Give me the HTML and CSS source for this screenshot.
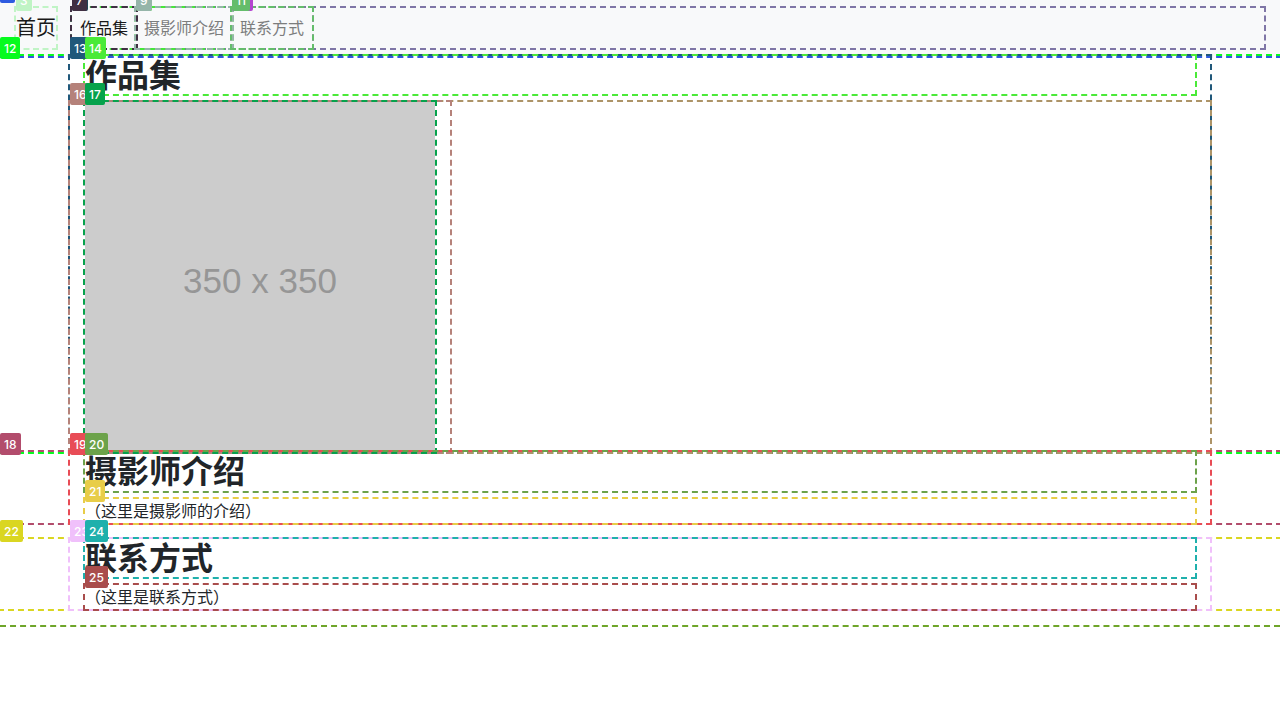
FILE: index.html
```html
<!DOCTYPE html>
<html lang="zh">
<head>
<meta charset="utf-8">
<title>作品集</title>
<link rel="stylesheet" href="styles.css">
</head>
<body>
<div class="page m1">
  <nav class="navbar mark m2"><span class="tag">2</span>
    <a class="brand mark m3" href="#"><span class="tag">3</span>首页</a>
    <div class="collapse mark m4">
      <ul class="nav-list mark m5">
        <li class="mark m6"><span class="tag">6</span><a class="nav-link active mark m7" href="#works"><span class="tag">7</span>作品集</a></li>
        <li class="mark m8"><span class="tag">8</span><a class="nav-link mark m9" href="#about"><span class="tag">9</span>摄影师介绍</a></li>
        <li class="mark m10"><span class="tag">10</span><a class="nav-link mark m11" href="#contact"><span class="tag">11</span>联系方式</a></li>
      </ul>
    </div>
  </nav>
  <section id="works" class="mark m12"><span class="tag">12</span>
    <div class="container mark m13"><span class="tag">13</span>
      <h2 class="mark m14"><span class="tag">14</span>作品集</h2>
      <div class="row mark m15">
        <div class="col mark m16"><span class="tag">16</span>
          <div class="photo mark m17"><span class="tag">17</span>350 x 350</div>
        </div>
      </div>
    </div>
  </section>
  <section id="about" class="mark m18"><span class="tag">18</span>
    <div class="container mark m19"><span class="tag">19</span>
      <h2 class="mark m20"><span class="tag">20</span>摄影师介绍</h2>
      <p class="mark m21"><span class="tag">21</span>（这里是摄影师的介绍）</p>
    </div>
  </section>
  <section id="contact" class="mark m22"><span class="tag">22</span>
    <div class="container mark m23"><span class="tag">23</span>
      <h2 class="mark m24"><span class="tag">24</span>联系方式</h2>
      <p class="mark m25"><span class="tag">25</span>（这里是联系方式）</p>
    </div>
  </section>
</div>
</body>
</html>
```
FILE: styles.css
```css
* { box-sizing: border-box; }
body {
  margin: 0;
  background: #fff;
  color: #212529;
  font: 16px/24px "Noto Sans", "Noto Sans CJK SC", sans-serif;
}
.page { border-bottom: 2px dashed var(--c); }
section { margin-bottom: 16px; }
#works { margin-bottom: 0; }

.mark { position: relative; outline: 2px dashed var(--c); }
.tag {
  position: absolute;
  z-index: 2;
  left: 0;
  top: -19px;
  padding: 5px 4px 3px;
  border-radius: 2px;
  background: var(--c);
  color: #fff;
  font: 500 12px/14px Inter, sans-serif;
}

.navbar {
  display: flex;
  align-items: center;
  padding: 8px 16px;
  background: #f8f9fa;
}
.brand {
  margin-right: 16px;
  font-size: 20px;
  line-height: 40px;
  color: #191919;
  text-decoration: none;
}
.collapse { display: flex; flex: 1; }
.nav-list { display: flex; margin: 0; padding: 0; list-style: none; }
.nav-link { display: block; padding: 8px; color: #7c7d7d; text-decoration: none; }
.nav-link.active { color: #191919; }

.container { max-width: 1140px; margin: 0 auto; padding: 0 15px; }
h2 { margin: 0 0 8px; font-size: 32px; font-weight: 600; line-height: 1.2; }
p { margin: 0; }
.row { display: flex; margin: 0 -15px; }
.col { flex: 0 0 33.3333%; padding: 0 15px; }
.photo {
  display: flex;
  align-items: center;
  justify-content: center;
  aspect-ratio: 1;
  padding-top: 8px;
  background: #ccc;
  color: #969696;
  font: 35px/40px "Liberation Sans", sans-serif;
}

.m1 { --c: #6fa52a; }
.m2 { --c: #2e5be0; }
.m3 { --c: #c0f4c5; }
.m4 { --c: #7f76a6; }
.m5 { --c: #45e838; }
.m6 { --c: #245; }
.m7 { --c: #402f42; }
.m8 { --c: #45e838; }
.m9 { --c: #95b5a9; }
.m10 { --c: #b545d0; }
.m11 { --c: #64bd6b; }
.m12 { --c: #06fb1e; }
.m13 { --c: #20587a; }
.m14 { --c: #4aea38; }
.m15 { --c: #ad9468; }
.m16 { --c: #b5827a; }
.m17 { --c: #06a24c; }
.m18 { --c: #b24c6c; }
.m19 { --c: #e84c56; }
.m20 { --c: #6ca24a; }
.m21 { --c: #e8cd48; }
.m22 { --c: #dad621; }
.m23 { --c: #f0c0fb; }
.m24 { --c: #1fb0ac; }
.m25 { --c: #a94d4c; }
```
